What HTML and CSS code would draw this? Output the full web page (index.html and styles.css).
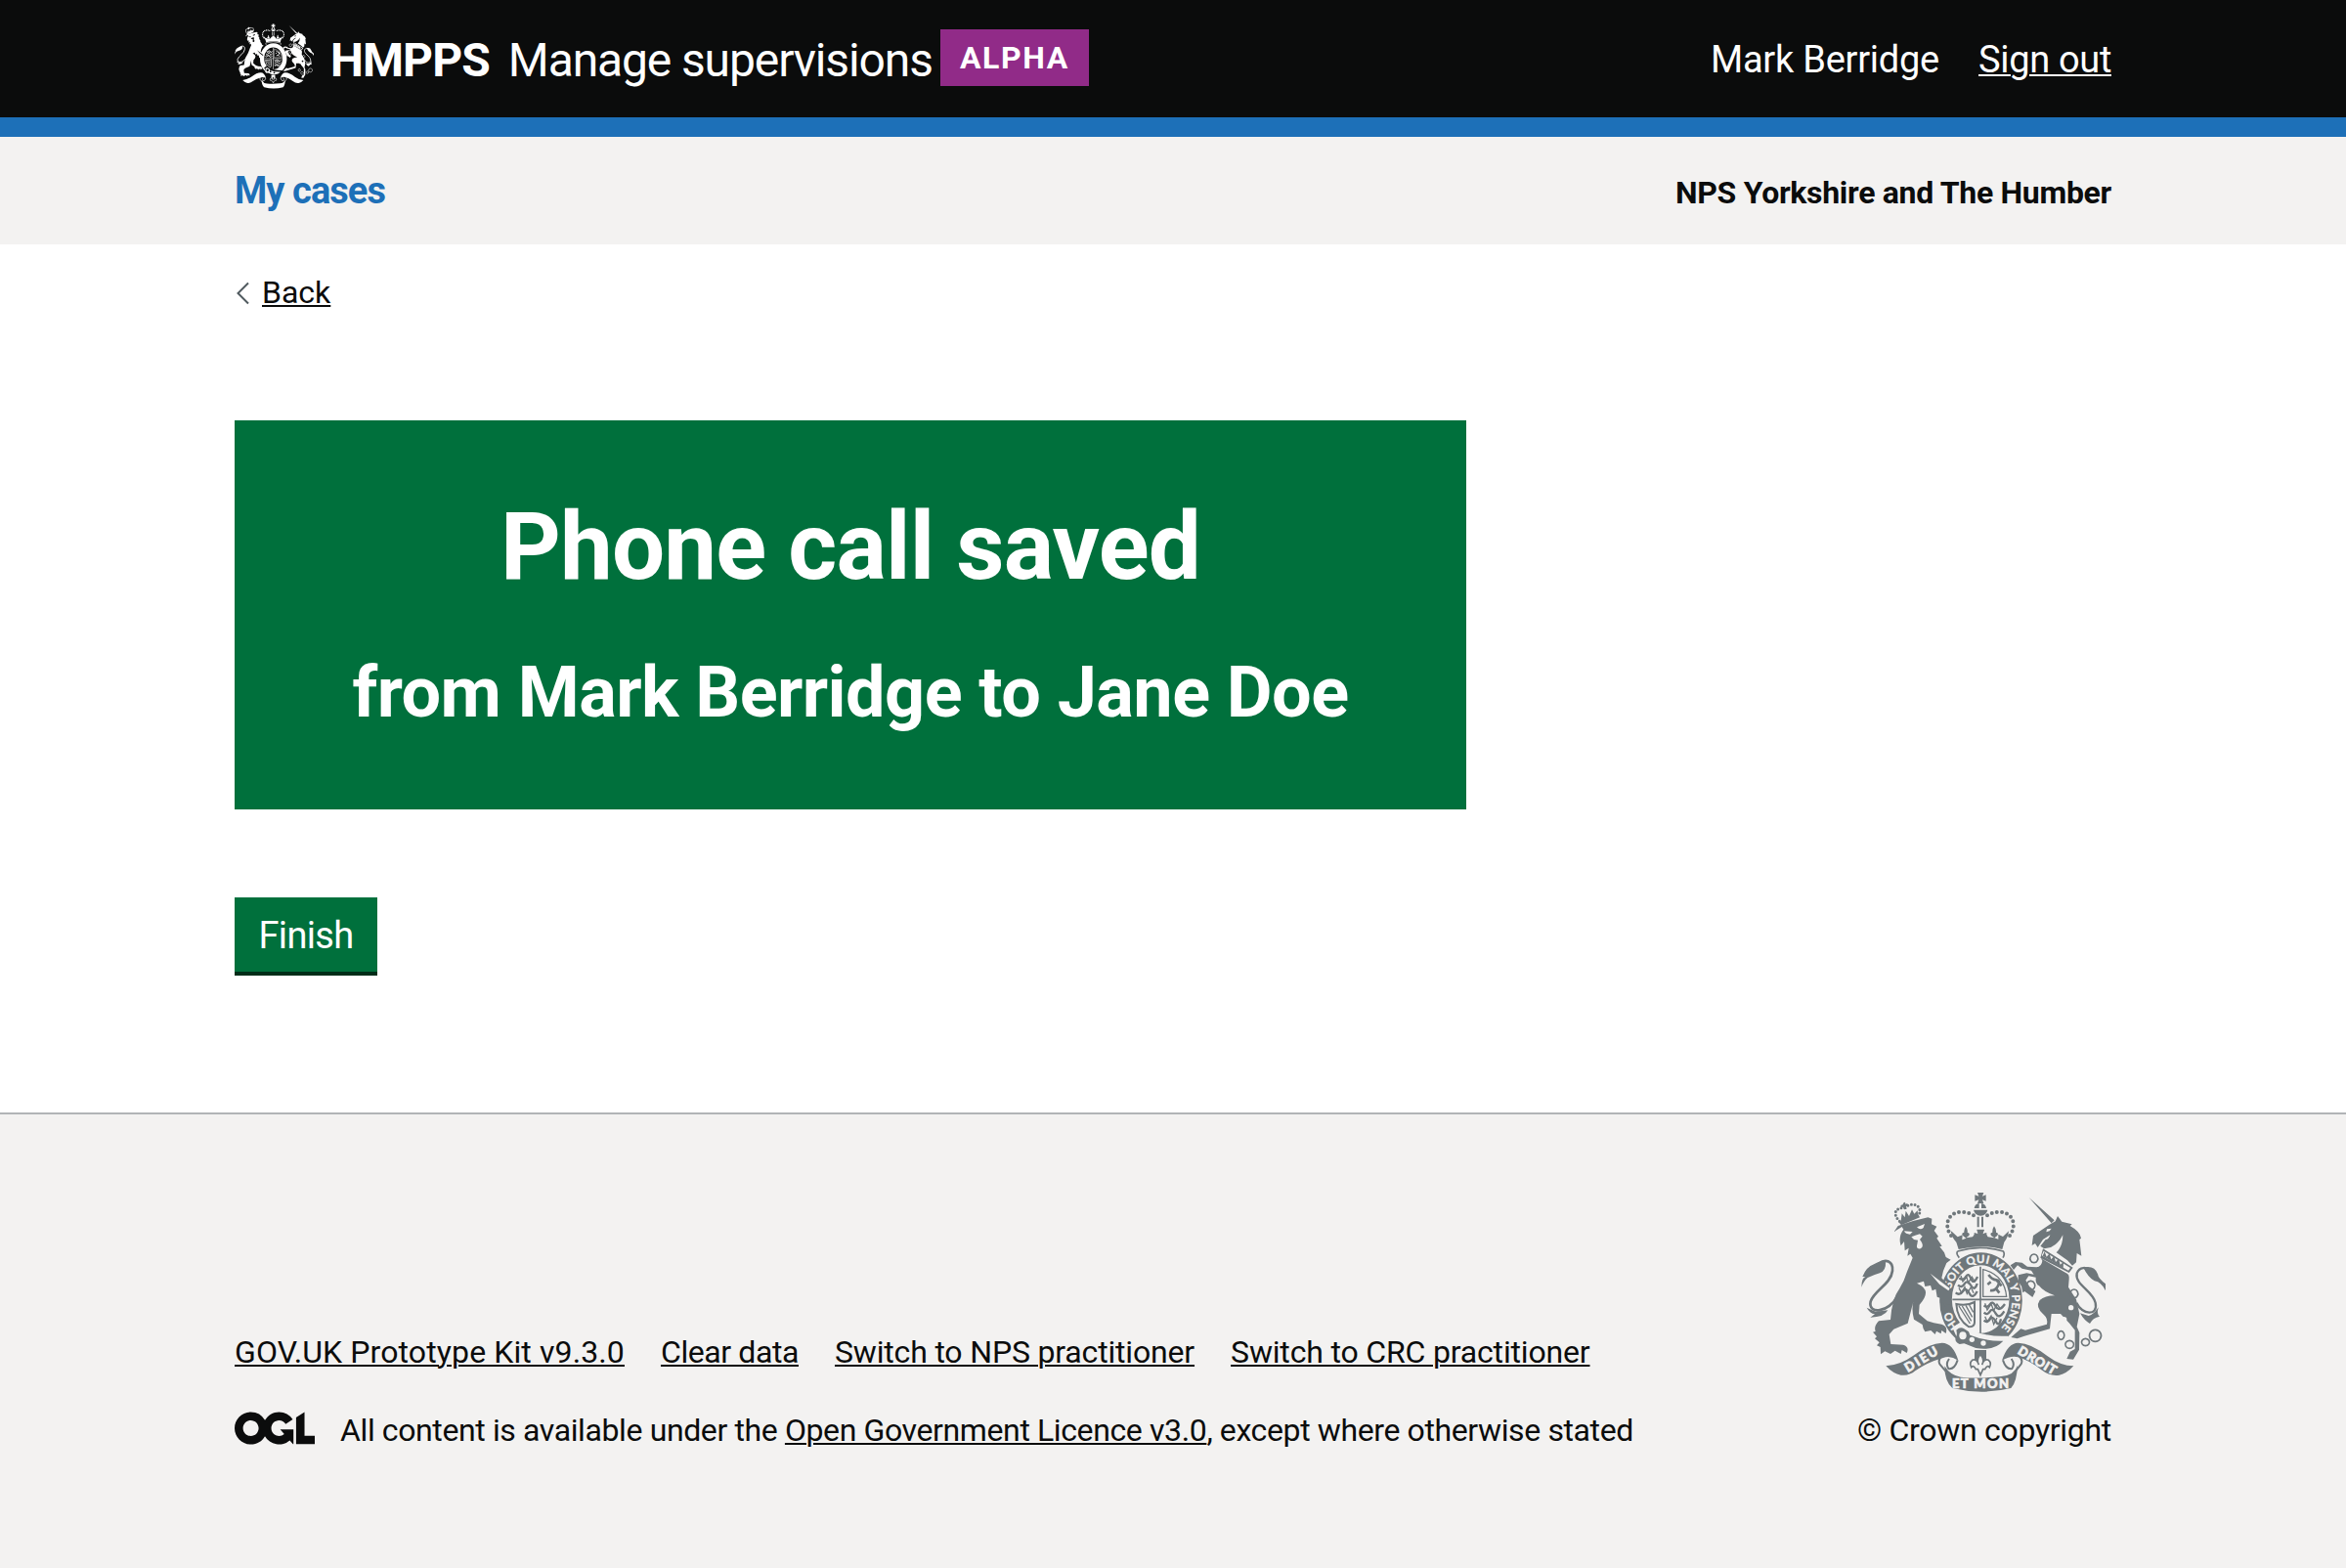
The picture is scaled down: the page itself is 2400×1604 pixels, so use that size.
FILE: index.html
```html
<!DOCTYPE html>
<html lang="en">
<head>
<meta charset="utf-8">
<title>Phone call saved - Manage supervisions</title>
<link rel="stylesheet" href="styles.css">
</head>
<body>
<svg class="sprite" aria-hidden="true">
  <symbol id="crest" viewBox="72 60 750 612">
    <g fill="currentColor" stroke="none">
      <!-- crown -->
      <path d="M429 60h19l-4 11 11-4v19l-11-4 4 11h-19l4-11-12 4V67l12 4z"/>
      <path d="M419 108q2-13 15-15v15zM441 93q13 2 15 15h-15zM417 113h43q-4 17-21 18-18-1-22-18zM428 134h6v32h-6zM441 134h6v32h-6z"/>
      <path fill="none" stroke="currentColor" stroke-width="12" stroke-linecap="round" stroke-dasharray="0 15.5" d="M348 192C325 160 338 122 376 120Q398 118 418 130M528 192C551 160 538 122 500 120Q478 118 458 130"/>
      <path d="M351 180l17 16 15-6-1 15 12-5-10-8q-6-9 4-10-1-9 5-18 7 9 5 18 10 2 4 11l-8 6 20-3 8-11 9 5-4-17 22 0-5 16 9-5 8 12 20 3-10-7q-5-9 4-10-1-10 5-19 7 9 6 19 10 2 3 11l-8 6 12 4 0-15 14 7 18-17q-2 20-14 34l-6 22q-60-17-134 0l-7-22q-13-12-17-34z"/>
      <path d="M428 174h22l-5 13 12-4v18l-12-5 4 11h-21l4-11-13 5v-18l13 4z"/>
      <path fill="none" stroke="currentColor" stroke-width="5" d="M368 240q70-22 140 0 6 8-1 20M368 240q-6 8 5 20"/>
      <!-- garter -->
      <path fill-rule="evenodd" d="M440 244a127 147 0 1 1-1 294 127 147 0 0 1 1-294zm-2 39a88 104 0 1 0 1 208 88 104 0 0 0-1-208z"/>
      <g class="crest__detail">
        <path id="motto" fill="none" d="M343 389A96 113 0 1 1 470 496"/>
        <path id="motto-start" fill="none" d="M390 487A96 113 0 0 1 343 389"/>
        <text class="crest__motto"><textPath href="#motto" startOffset="34" textLength="388">SOIT QUI MAL Y PENSE</textPath></text>
        <text class="crest__motto"><textPath href="#motto-start" startOffset="24">HO</textPath></text>
      </g>
      <!-- shield -->
      <g fill="none" stroke="currentColor">
        <path stroke-width="5" d="M438 287v208M352 388h174"/>
        <path stroke-width="7" d="M373 322q12 10 20-4t16 6 20-6M369 344q12 10 20-4t20 5 19-6M362 367q12 10 22-4t20 6 24-6M449 406q10 10 18-3t18 6 28-7M449 428q10 10 18-3t18 6 26-7M449 452q10 10 18-3t18 6 16-7"/>
        <path stroke-width="4" d="M378 315l6 18 12-14 4 18 12-18 9 15M372 352l8 16 10-18 7 20 12-20 8 18M452 400l7 20 12-18 8 20 10-20 10 14M452 440l7 16 12-18 8 26 10-20"/>
        <path stroke-width="4" d="M446 296v83h72q-6-66-72-83z"/>
        <path stroke-width="8" d="M463 312q10 15 24 16t5 18-24 14M487 328l16 18M484 352l12 16M470 334l-10 8"/>
        <path stroke-width="6" d="M364 402q32 7 56-6v62q0 14-18 14-36-24-38-70z"/>
        <path stroke-width="4" d="M372 408l34 54M382 408l28 46M393 406l20 36M404 405l12 22"/>
      </g>
      <!-- garter buckle and tail -->
      <path class="crest__knock" d="M352 474l24-16 36 24q50 22 110 18l4 22-56 30-92-20z"/>
      <path d="M364 482q12-12 24-4l14 9 4 10q50 20 102 18-28 32-84 22l-36-14-14 2q-16-8-12-20 6-8 2-23z"/>
      <g class="crest__knock"><ellipse cx="384" cy="499" rx="11" ry="12"/><circle cx="412" cy="511" r="8"/><circle cx="447" cy="522" r="8"/></g>
      <!-- lion -->
      <path fill="none" stroke="currentColor" stroke-width="9" stroke-linecap="round" stroke-dasharray="0 11" d="M190 148C166 124 178 105 205 107 228 86 264 98 248 132"/>
      <path d="M187 150l60-23 5 9-57 24zM201 92l6-3 1 6 6-2 1 8-6 1 3 8-8 2-3-8-6 2-2-7 7-2zM194 146l3-22 9 12 3-20 10 16 9-20 7 13 10-10 2 20-48 18z"/>
      <path d="M173 180l12-18q45-16 92-26l12 4-1 17 16 7-8 13 13 17-5 6 16 24-7 2 14 18 5 14 15 8-13 10-10 24-5 22 24 26 8 30-6 14 4 14-14-4-5 8-7-14-9 2 2-14-11-4-4-24-11 5-5-16-17 3-4-16-21 6q26 12 27 28t-19 38l-2 28 26 22 20 6 24 4q20 6 13 28l-13-9-2 10-14-8-4 10-13-12-18 4q-7-10-8-22l-26-16q-8-30-2-54l-17 66-43 18-14 16 5 30 38 2q20 6 11 25l-15-9-3 12-18-10-14 10-17-8-13 9-1-22-11-5 8-9-14-12 6-6-12-14 8-2q-6-16 10-32l36-4q4-64 28-96 14-22 23-52l17-42-7-12-9 6 4-24-12 8-2-28-10 13q-9-28 8-50l-5-8z"/>
      <g class="crest__knock"><path d="M204 178l26 2-8 8q-14 0-18-10zM243 166l24-10-4 12q-10 8-20-2zM226 196l12-5 14-4 8 7-8 10q16 20 2 28-15 2-10-14l2-12-12-2z"/><path d="M284 308l60 46-4 7-28-20z"/></g>
      <path fill="none" stroke="currentColor" stroke-width="8" d="M183 378C158 428 92 436 101 394 110 362 164 340 168 300 171 270 147 262 126 278"/>
      <path d="M73 350q0-28 12-32l-9 0q12-30 35-38 24-14 36-6 2 26-18 33-20 6-37 14-12 10-19 29zM89 413l27 12 38-4q-12 22-54 22l14-10q-16-3-25-20z"/>
      <!-- unicorn -->
      <path d="M587 75l78 70-9 9zM600 192l50-34 18-10 7-16 13 17 31 8-6 5q32 18 34 38l-5 4 6 50-14-8-2 28-12 10-15-16-34-24q20-20 20-54-12 26-37 38l-20 4-12-8 16-20q10 0 14-14l-22 14-16 24-8-12-10 6z"/>
      <path d="M630 232l92 58-12 16-88-46zM624 262l76 44q12 4 10 20l-2 24 24 38 10 44-8 40 8 18-1 52-18 30-20-2 10-22 15-8 0-58-16-20-28-30-28 0-5 46-78 22-22 8-19-4 30-26 14 4 66-18q4-18-10-30-27-22-12-44 16-14 46-14-34-12-48-30-12-6-10-26l-22-4-9 13 12 20 18 14-9 18-24-18-6 4-4-20-10-14 0-20 26-6 22 4-8-12-28-6-14-10-12 14-10-14 16-10 20 2 16 12 28 2q16-2 18-20z"/>
      <g class="crest__knock"><path d="M632 239l82 52-6 8-82-46zM642 172l14-2-6 8-10 3z"/><circle cx="716" cy="413" r="8"/><circle cx="695" cy="449" r="8"/></g>
      <path d="M629 254l6-13 6 16 9-10 5 18 9-10 5 18 9-10 5 18 10-8-1 19z"/>
      <path fill="none" stroke="currentColor" stroke-width="5" d="M602 249a12 13 0 1 0 1 0zM592 331a13 14 0 1 0 1 0zM725 357a12 13 0 1 0 1 0zM685 485a10 13 0 1 0 1 0zM711 514a13 12 0 1 0 1 0zM760 508a12 11 0 1 0 1 0zM790 481a18 18 0 1 0 1 0z"/>
      <path fill="none" stroke="currentColor" stroke-width="7" d="M733 398C750 436 800 440 791 398 784 362 727 342 734 308 742 286 764 288 776 300"/>
      <path d="M754 290q34-8 44 20 2 14 24 30v21q-12-26-34-30-20-12-34-41zM744 430l26 8q16-4 30-26-6 22 4 28-22 4-30 22-18-10-30-32z"/>
      <!-- scroll -->
      <path d="M148 592q46-4 84-32 50-38 88-39 34 0 50 54-24-16-46-8-50 14-86 40-18 16-44 13-24-4-46-28zM724 592q-40 0-80-30-50-40-90-41-32 0-50 54 28-16 50-10 34 10 70 38 28 22 56 17 22-4 44-28z"/>
      <path d="M328 592q18 30 50 34 60 6 124-2 40-4 50-34-2 50-20 70-90 22-180 0-24-20-24-68z"/>
      <path fill="none" stroke="currentColor" stroke-width="6" d="M322 560q-16 12-9 26 10 12 22 26M368 574q-10 30-28 26-10-14 2-30M554 560q16 12 9 26-10 12-20 26M507 574q10 30 28 26 10-14-2-30"/>
      <path d="M420 543h36v32h-36z"/>
      <path class="crest__fleur" d="M438 556q14 16 5 32 6-20 20-14 10 8 3 22-6-8-14 6h-6l-8 18-8-18h-6q-8-14-14-6-7-14 3-22 14-6 20 14-9-16 5-32z"/>
      <g class="crest__detail crest__scroll-text">
        <text transform="translate(215 612) rotate(-31)" textLength="112">DIEU</text>
        <text transform="translate(550 553) rotate(31)" textLength="130">DROIT</text>
        <text x="351" y="661" textLength="174">ET MON</text>
      </g>
    </g>
  </symbol>
</svg>

<header class="header">
  <div class="container header__row">
    <a class="header__brand" href="#">
      <svg class="header__crest"><use href="#crest"/></svg>
      <span class="header__org">HMPPS</span>
      <span class="header__product">Manage supervisions</span>
    </a>
    <strong class="tag">ALPHA</strong>
    <nav class="header__user">
      <span class="header__name">Mark Berridge</span>
      <a class="header__signout" href="#">Sign out</a>
    </nav>
  </div>
</header>

<div class="subnav">
  <div class="container subnav__row">
    <a class="subnav__link" href="#">My cases</a>
    <strong class="subnav__region">NPS Yorkshire and The Humber</strong>
  </div>
</div>

<div class="page">
  <main class="container main">
    <a class="back" href="#">
      <svg class="back__icon" viewBox="0 0 13 24"><path d="M12 1.5 1.5 12 12 22.5"/></svg>
      <span class="back__text">Back</span>
    </a>
    <section class="panel">
      <h1 class="panel__title">Phone call saved</h1>
      <p class="panel__body">from Mark Berridge to Jane Doe</p>
    </section>
    <button class="button" type="button">Finish</button>
  </main>
</div>

<footer class="footer">
  <div class="container footer__row">
    <div class="footer__meta">
      <div class="footer__links">
        <a class="footer__kit" href="#">GOV.UK Prototype Kit v9.3.0</a>
        <a class="footer__clear" href="#">Clear data</a>
        <a href="#">Switch to NPS practitioner</a>
        <a href="#">Switch to CRC practitioner</a>
      </div>
      <div class="footer__licence">
        <svg class="footer__ogl" viewBox="0 0 483.2 195.7"><path fill="currentColor" d="M421.5 142.8V.1l-50.7 32.3v161.1h112.4v-50.7zm-122.3-9.6A47.12 47.12 0 0 1 221 97.8c0-26 21.1-47.1 47.1-47.1 16.7 0 31.4 8.7 39.7 21.8l42.7-27.2A97.63 97.63 0 0 0 268.1 0c-36.5 0-68.3 20.1-85.1 49.7A98 98 0 0 0 97.8 0C43.9 0 0 43.9 0 97.8s43.9 97.8 97.8 97.8c36.5 0 68.3-20.1 85.1-49.7a97.76 97.76 0 0 0 149.6 25.4l19.4 22.2h3v-87.8h-80l24.3 27.5zM97.8 145c-26 0-47.1-21.1-47.1-47.1s21.1-47.1 47.1-47.1 47.1 21.1 47.1 47.1S123.8 145 97.8 145"/></svg>
        <span class="footer__text">All content is available under the <a href="#">Open Government Licence v3.0</a>, except where otherwise stated</span>
      </div>
    </div>
    <div class="footer__copyright">
      <svg class="footer__crest"><use href="#crest"/></svg>
      <span class="footer__crown">© Crown copyright</span>
    </div>
  </div>
</footer>
</body>
</html>
```
FILE: styles.css
```css
* { box-sizing: border-box; }

body {
  margin: 0;
  min-height: 1604px;
  display: flex;
  flex-direction: column;
  background: #f3f2f1;
  color: #0b0c0c;
  font-family: Roboto, sans-serif;
  font-size: 32px;
  line-height: 40px;
}

a {
  color: inherit;
  text-decoration: underline;
  text-decoration-thickness: 2px;
  text-underline-offset: 2px;
}

.sprite { position: absolute; width: 0; height: 0; }

.container { width: 1920px; margin: 0 auto; }

/* Royal arms */
.crest__knock { fill: var(--ground); }
.crest__fleur { fill: var(--ground); stroke: currentColor; stroke-width: 5px; }
.crest__detail { display: var(--detail, inline); fill: var(--ground); stroke: var(--ground); stroke-width: 1px; }
.crest__detail path { stroke: none; }
.crest__motto { font: 700 34px Lato, sans-serif; }
.crest__scroll-text { font: 900 39px Lato, sans-serif; stroke-width: 2px; }

/* Header */
.header {
  height: 140px;
  background: #0b0c0c;
  border-bottom: 20px solid #1d70b8;
  color: #fff;
}

.header__row { display: flex; align-items: flex-start; }

.header__brand {
  display: flex;
  align-items: flex-start;
  padding-top: 24px;
  color: #fff;
  text-decoration: none;
}

.header__crest {
  --ground: #0b0c0c;
  --detail: none;
  width: 81px;
  height: 67px;
}

.header__org,
.header__product { margin-top: 3px; font-size: 48px; line-height: 70px; }
.header__org { margin-left: 17px; font-weight: 700; letter-spacing: -0.9px; }
.header__product { margin-left: 19px; letter-spacing: -1.12px; }

.tag {
  width: 152px;
  height: 58px;
  margin: 30px 0 0 8px;
  background: #912b88;
  font-size: 32px;
  line-height: 58px;
  letter-spacing: 1.6px;
  text-align: center;
}

.header__user {
  display: flex;
  gap: 40px;
  margin-left: auto;
  padding-top: 35px;
  font-size: 38px;
  line-height: 52px;
}
.header__name { letter-spacing: -0.24px; }
.header__signout { letter-spacing: -0.33px; }

/* Secondary navigation */
.subnav { height: 110px; }
.subnav__row { display: flex; justify-content: space-between; padding-top: 29px; }
.subnav__link {
  color: #1d70b8;
  font-size: 38px;
  font-weight: 700;
  line-height: 52px;
  letter-spacing: -0.94px;
  text-decoration: none;
}
.subnav__region { line-height: 56px; letter-spacing: -0.3px; }

/* Page content */
.page { height: 888px; background: #fff; }
.main { display: flex; flex-direction: column; align-items: flex-start; padding-top: 30px; }

.back { display: flex; align-items: center; gap: 13px; padding-left: 2px; text-decoration: none; }
.back__icon { width: 13px; height: 24px; fill: none; stroke: #505a5f; stroke-width: 2; }
.back__text {
  padding-bottom: 2px;
  line-height: 38px;
  text-decoration: underline;
  text-decoration-thickness: 2px;
  text-underline-offset: 2px;
}

.panel {
  width: 1260px;
  height: 398px;
  margin-top: 110px;
  padding-top: 79px;
  background: #00703c;
  color: #fff;
  text-align: center;
}
.panel__title { margin: 0; font-size: 96px; font-weight: 700; line-height: 100px; letter-spacing: -0.83px; }
.panel__body { margin: 50px 0 0; font-size: 72px; font-weight: 700; line-height: 100px; letter-spacing: -0.55px; }

.button {
  width: 146px;
  height: 76px;
  margin: 90px 0 0;
  padding: 2px 0 0;
  border: 0;
  background: #00703c;
  box-shadow: 0 4px 0 #002d18;
  color: #fff;
  font: 38px/74px Roboto, sans-serif;
  letter-spacing: -0.67px;
}

/* Footer */
.footer { flex: 1; border-top: 2px solid #b1b4b6; }
.footer__row { display: flex; justify-content: space-between; align-items: flex-end; height: 343px; }
.footer__links { display: flex; gap: 37px; margin-bottom: 40px; letter-spacing: -0.17px; }
.footer__kit { letter-spacing: 0.11px; }
.footer__clear { letter-spacing: -0.41px; }
.footer__licence { display: flex; align-items: flex-start; gap: 26px; }
.footer__ogl { width: 82px; height: 34px; margin-top: 1px; }
.footer__text { letter-spacing: -0.385px; }
.footer__copyright { display: flex; flex-direction: column; align-items: center; }
.footer__crest {
  --ground: #f3f2f1;
  width: 250px;
  height: 204px;
  margin: 0 2px 19px 0;
  color: #6f777b;
}
.footer__crown { letter-spacing: -0.29px; }
```
